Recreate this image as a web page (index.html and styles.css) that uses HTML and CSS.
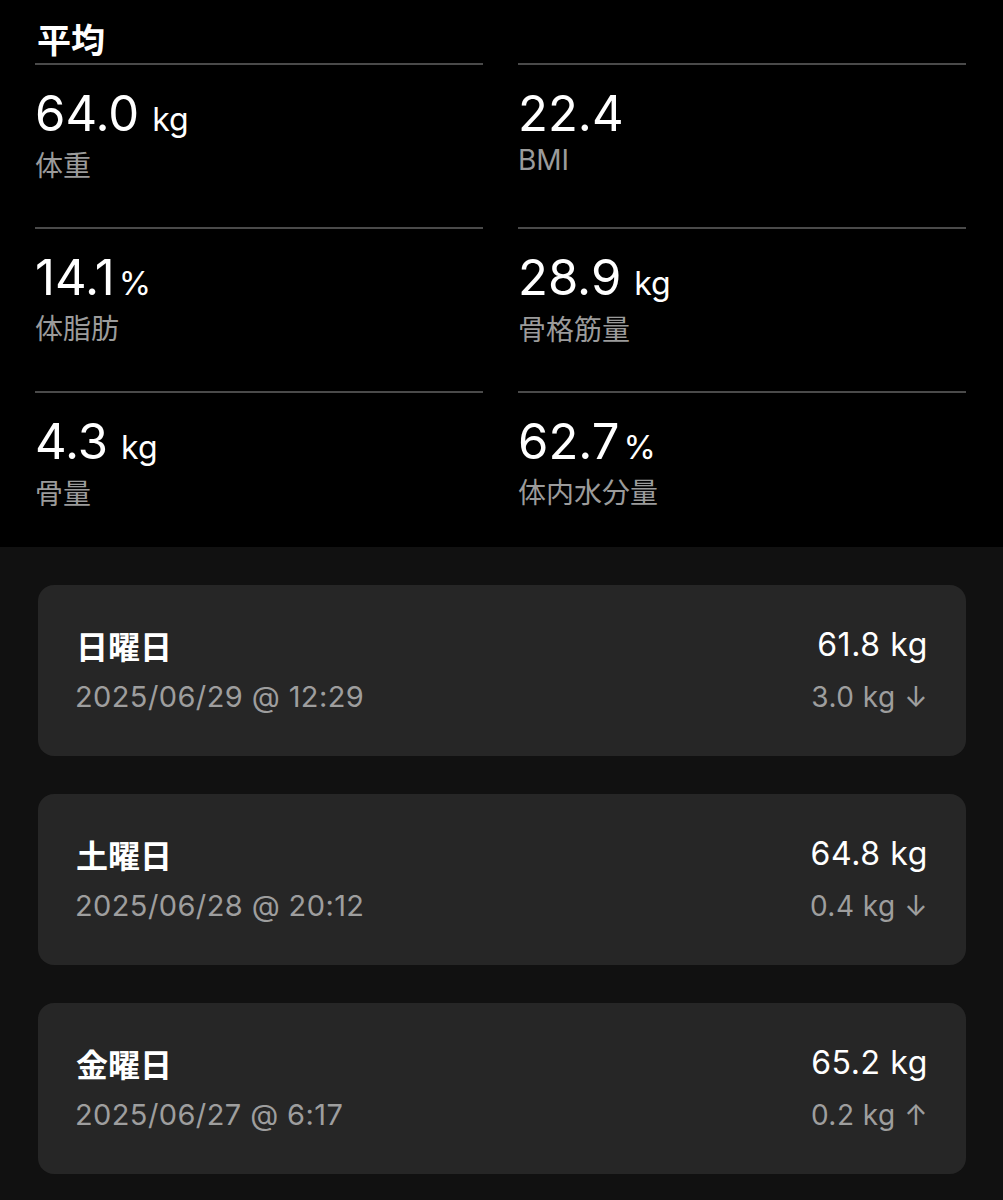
FILE: index.html
```html
<!DOCTYPE html>
<html lang="ja">
<head>
<meta charset="utf-8">
<link rel="stylesheet" href="styles.css">
</head>
<body>
<section class="avg">
  <h2 class="avg-title">平均</h2>
  <div class="grid">
    <div class="cell"><div class="val">64.0<span class="unit">kg</span></div><div class="lbl">体重</div></div>
    <div class="cell"><div class="val">22.4</div><div class="lbl">BMI</div></div>
    <div class="cell"><div class="val">14.1<span class="pct">%</span></div><div class="lbl">体脂肪</div></div>
    <div class="cell"><div class="val">28.9<span class="unit">kg</span></div><div class="lbl">骨格筋量</div></div>
    <div class="cell last"><div class="val">4.3<span class="unit">kg</span></div><div class="lbl">骨量</div></div>
    <div class="cell last"><div class="val">62.7<span class="pct">%</span></div><div class="lbl">体内水分量</div></div>
  </div>
</section>
<section class="list">
  <div class="card">
    <div class="left"><div class="day">日曜日</div><div class="date">2025/06/29 @ 12:29</div></div>
    <div class="right"><div class="weight">61.8 kg</div><div class="diff">3.0 kg ↓</div></div>
  </div>
  <div class="card">
    <div class="left"><div class="day">土曜日</div><div class="date">2025/06/28 @ 20:12</div></div>
    <div class="right"><div class="weight">64.8 kg</div><div class="diff">0.4 kg ↓</div></div>
  </div>
  <div class="card">
    <div class="left"><div class="day">金曜日</div><div class="date">2025/06/27 @ 6:17</div></div>
    <div class="right"><div class="weight">65.2 kg</div><div class="diff">0.2 kg ↑</div></div>
  </div>
</section>
</body>
</html>
```
FILE: styles.css
```css
* { box-sizing: border-box; }
html, body { margin: 0; padding: 0; }
body {
  background: #111111;
  color: #ffffff;
  font-family: Inter, "Noto Sans CJK JP", sans-serif;
  width: 1003px;
}
.avg {
  background: #000000;
  height: 547px;
  padding: 0 37px 0 35px;
}
.avg-title {
  margin: 0;
  padding-top: 19px;
  height: 63px;
  font-size: 34px;
  line-height: 40px;
  font-weight: 700;
  padding-left: 2px;
  font-family: "Noto Sans CJK JP", sans-serif;
}
.grid {
  display: grid;
  grid-template-columns: 1fr 1fr;
  column-gap: 35px;
}
.cell {
  border-top: 2px solid #4a4a4a;
  height: 164px;
  padding-top: 20px;
}
.cell.last { height: 156px; }
.val {
  font-size: 49px;
  line-height: 58px;
  font-weight: 400;
  letter-spacing: 0;
  color: #ffffff;
}
.unit {
  font-size: 32px;
  margin-left: 13px;
}
.pct {
  font-size: 33px;
  margin-left: 4px;
}
.lbl {
  font-family: Inter, "Noto Sans CJK JP", sans-serif;
  font-size: 28px;
  line-height: 34px;
  color: #9b9b9b;
}
.list {
  padding: 38px 37px 20px 38px;
  display: flex;
  flex-direction: column;
  gap: 38px;
}
.card {
  background: #262626;
  border-radius: 16px;
  height: 171px;
  padding: 0 38px 0 37px;
  display: flex;
  justify-content: space-between;
  align-items: center;
}
.left, .right { display: flex; flex-direction: column; gap: 14px; }
.right { align-items: flex-end; }
.day {
  font-family: "Noto Sans CJK JP", sans-serif;
  font-weight: 700;
  font-size: 32px;
  line-height: 38px;
  padding-left: 1px;
}
.date {
  font-size: 29px;
  line-height: 38px;
  letter-spacing: 0.4px;
  color: #9e9e9e;
}
.weight {
  font-size: 32px;
  line-height: 38px;
  letter-spacing: 0.6px;
  color: #ffffff;
}
.diff {
  font-size: 28px;
  line-height: 38px;
  letter-spacing: 0.5px;
  color: #9e9e9e;
}
```
